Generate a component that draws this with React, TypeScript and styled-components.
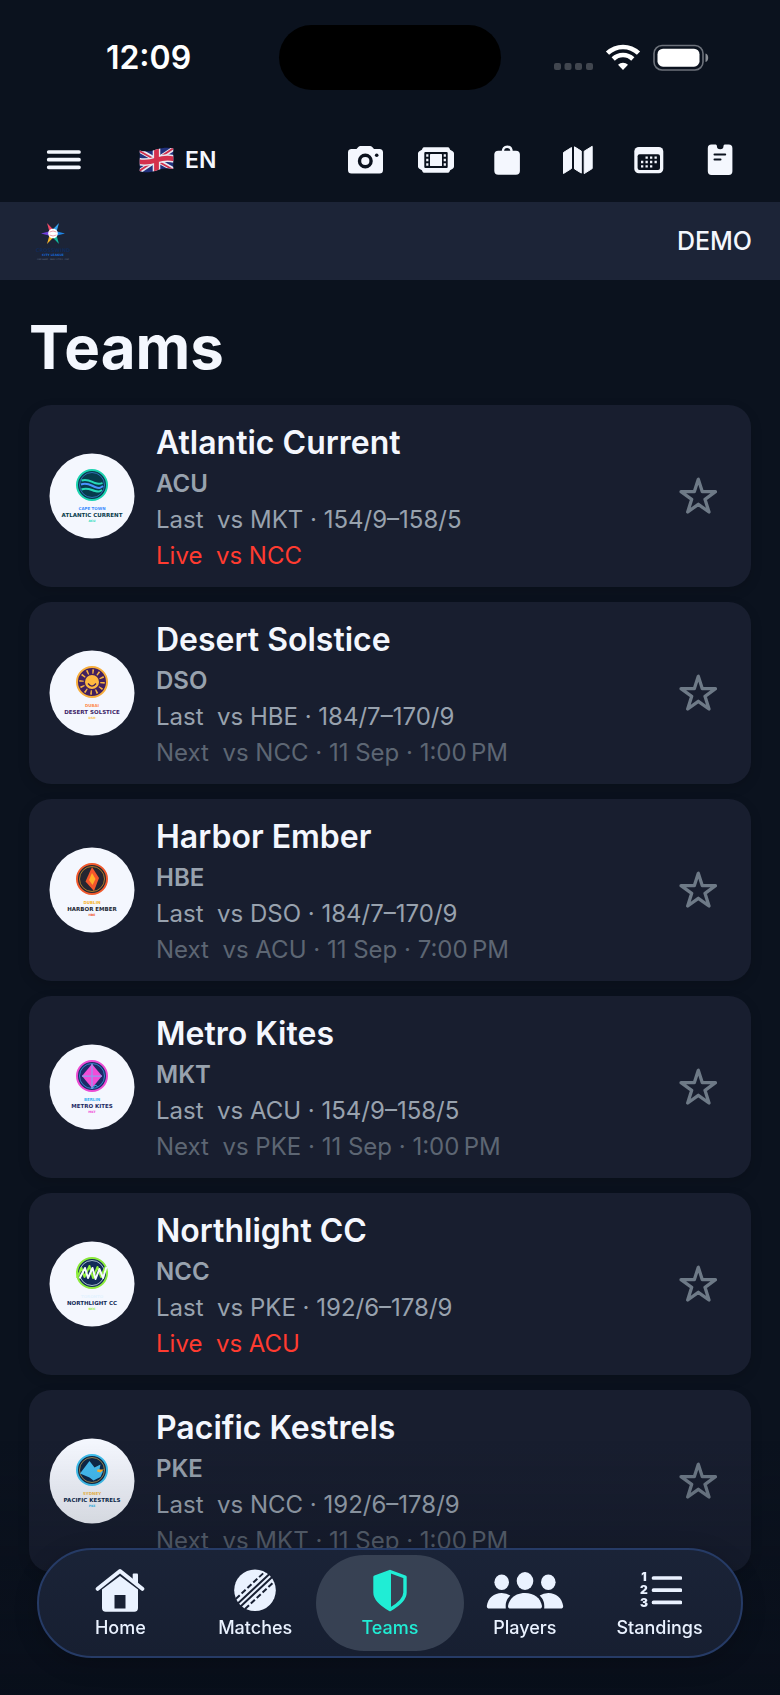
import type { ReactNode } from "react";
import styled, { createGlobalStyle } from "styled-components";

const GlobalStyle = createGlobalStyle`
  * {
    box-sizing: border-box;
  }

  body {
    margin: 0;
    background: #0b121e;
    color: #f4f7fe;
    font-family: Inter, "Liberation Sans", sans-serif;
  }

  button {
    padding: 0;
    border: 0;
    background: none;
    color: inherit;
    font: inherit;
    cursor: pointer;
  }

  svg {
    display: block;
  }
`;

const Page = styled.div`
  min-height: 100vh;
`;

const StatusBar = styled.div`
  display: grid;
  grid-template-columns: 1fr 222px 1fr;
  align-items: center;
  height: 118px;
  padding-bottom: 3px;
`;

const Clock = styled.time`
  padding-left: 18px;
  color: #fff;
  font-size: 32px;
  font-weight: 600;
  line-height: 36px;
  text-align: center;
`;

const Island = styled.div`
  height: 65px;
  border-radius: 33px;
  background: #000;
`;

const StatusIcons = styled.div`
  display: flex;
  justify-content: flex-end;
  padding-right: 71px;
`;

const Toolbar = styled.header`
  display: flex;
  align-items: center;
  height: 84px;
  padding: 0 42px 0 46px;
`;

const IconButton = styled.button`
  display: flex;
  color: #f4f7fe;
`;

const Language = styled.button`
  display: flex;
  align-items: center;
  gap: 10px;
  margin-left: 56px;
  font-size: 23px;
  font-weight: 600;
  line-height: 28px;
`;

const Actions = styled.div`
  display: flex;
  gap: 35px;
  margin-left: auto;
`;

const Banner = styled.div`
  display: flex;
  align-items: center;
  justify-content: space-between;
  height: 78px;
  padding: 0 28px 0 33px;
  background: #1c2437;
`;

const BannerLabel = styled.span`
  font-size: 25px;
  font-weight: 500;
  line-height: 30px;
`;

const Main = styled.main`
  padding: 30px 29px 0;
`;

const Title = styled.h1`
  margin: 0 0 21px;
  font-size: 60px;
  font-weight: 650;
  line-height: 74px;
`;

const TeamList = styled.ul`
  display: flex;
  flex-direction: column;
  gap: 15px;
  margin: 0;
  padding: 0;
  list-style: none;
`;

const TeamCard = styled.li`
  display: flex;
  align-items: center;
  gap: 21px;
  padding: 0 34px 0 20px;
  border-radius: 22px;
  background: #181e2f;
  box-shadow: 0 4px 12px rgba(0, 0, 0, 0.15);
`;

const TeamInfo = styled.div`
  flex: 1;
  min-width: 0;
  padding: 15px 0 13px;
`;

const TeamName = styled.h2`
  margin: 0;
  font-size: 32px;
  font-weight: 600;
  line-height: 46px;
`;

type LineTone = "code" | "last" | "next" | "live";

const lineColors: Record<LineTone, string> = {
  code: "#98a2ae",
  last: "#98a2ae",
  next: "#5d6673",
  live: "#ff3b30",
};

const Line = styled.p<{ $tone: LineTone }>`
  margin: 0;
  color: ${({ $tone }) => lineColors[$tone]};
  font-size: 24px;
  font-weight: ${({ $tone }) => ($tone === "code" ? 600 : 400)};
  line-height: 36px;
  white-space: pre;
`;

const StarButton = styled.button`
  display: flex;
  color: #6e7a87;
`;

const Fade = styled.div`
  position: fixed;
  right: 0;
  bottom: 0;
  left: 0;
  height: 255px;
  background: linear-gradient(rgba(6, 11, 22, 0), rgba(6, 11, 22, 0.4));
  pointer-events: none;
`;

const TabBar = styled.nav`
  position: fixed;
  right: 37px;
  bottom: 37px;
  left: 37px;
  display: grid;
  grid-template-columns: repeat(5, 1fr);
  padding: 5px 14px;
  border: 2px solid #263b66;
  border-radius: 55px;
  background: linear-gradient(#1a2337, #171f31);
  box-shadow: 0 6px 24px rgba(0, 0, 0, 0.2);
`;

const Tab = styled.a<{ $active?: boolean }>`
  position: relative;
  display: flex;
  flex-direction: column;
  align-items: center;
  gap: 4px;
  height: 96px;
  padding-top: 13px;
  color: ${({ $active }) => ($active ? "#20edd5" : "#eaf2ff")};
  font-size: 18px;
  font-weight: 500;
  line-height: 24px;
  text-decoration: none;

  &::before {
    content: "";
    position: absolute;
    inset: 0 -7px;
    border-radius: 48px;
    background: ${({ $active }) => ($active ? "#374153" : "transparent")};
  }

  > * {
    position: relative;
  }
`;

function StatusGlyphs() {
  return (
    <svg width="155" height="28" viewBox="0 0 155 28" aria-hidden="true">
      <g fill="#41464f">
        <rect x="0" y="19" width="7" height="7" rx="2" />
        <rect x="10.5" y="19" width="7" height="7" rx="2" />
        <rect x="21" y="19" width="7" height="7" rx="2" />
        <rect x="32" y="19" width="7" height="7" rx="2" />
      </g>
      <g fill="none" stroke="#fff" strokeWidth="4.6">
        <path d="M53.5 9.2a22.3 22.3 0 0 1 31 0" />
        <path d="M59.2 15a14 14 0 0 1 19.6 0" />
      </g>
      <path d="M64 20.8a7.2 7.2 0 0 1 10 0L69 26z" fill="#fff" />
      <rect x="100" y="1.5" width="49" height="24.5" rx="8" fill="none" stroke="#6d727b" strokeWidth="1.6" />
      <rect x="103.5" y="4.7" width="42" height="18" rx="5.5" fill="#fff" />
      <path d="M151.5 9.5c3.6 1 3.6 7.5 0 8.5z" fill="#8a8e95" />
    </svg>
  );
}

function MenuIcon() {
  return (
    <svg width="36" height="32" viewBox="0 0 36 32" aria-hidden="true">
      <path d="M2.7 8H33M2.7 15.7H33M2.7 23.3H33" stroke="currentColor" strokeWidth="3.7" strokeLinecap="round" />
    </svg>
  );
}

function FlagIcon() {
  return (
    <svg width="37" height="26" viewBox="0 0 36 26" aria-hidden="true">
      <clipPath id="flag">
        <path d="M1 3.5C7 5 12 4.5 18 2.5S30 0 35 1.5V22c-6-1.5-11-.5-17 1.5S6 26 1 24z" />
      </clipPath>
      <g clipPath="url(#flag)">
        <path d="M0 0h36v26H0z" fill="#21317c" />
        <path d="M0 3l36 20M0 25L36 1" stroke="#e9e8f0" strokeWidth="4.4" />
        <path d="M0 3.5l36 20M0 24.5L36 .5" stroke="#cf2f4c" strokeWidth="1.8" />
        <path d="M18 0v26M0 14.5c7 1.5 12 .5 18-1.5s12-2.5 18-1" stroke="#e9e8f0" strokeWidth="7.6" fill="none" />
        <path d="M18 0v26M0 14.5c7 1.5 12 .5 18-1.5s12-2.5 18-1" stroke="#d4304c" strokeWidth="4.8" fill="none" />
      </g>
    </svg>
  );
}

const toolIcons: { label: string; drawing: ReactNode }[] = [
  {
    label: "Photos",
    drawing: (
      <>
        <path
          fill="currentColor"
          d="M4 5h5.5l1.8-2Q12.2 2 13.5 2h9.5q1.3 0 2.2 1L27 5h5.5A3.5 3.5 0 0 1 36 8.5V26a3.5 3.5 0 0 1-3.5 3.5h-28A3.5 3.5 0 0 1 1 26V8.5A3.5 3.5 0 0 1 4 5z"
        />
        <circle cx="18.3" cy="17" r="5.8" fill="none" stroke="#0b121e" strokeWidth="3.4" />
        <circle cx="29.7" cy="11.3" r="1.8" fill="#0b121e" />
      </>
    ),
  },
  {
    label: "Tickets",
    drawing: (
      <>
        <path
          fill="currentColor"
          d="M6 3.3h24a1.5 1.5 0 0 1 1.3.8l.8 1.7 2.6 1.5A2.5 2.5 0 0 1 36 9.5v13a2.5 2.5 0 0 1-1.3 2.2l-2.6 1.5-.8 1.7a1.5 1.5 0 0 1-1.3.8H6a1.5 1.5 0 0 1-1.3-.8l-.8-1.7-2.6-1.5A2.5 2.5 0 0 1 0 22.5v-13a2.5 2.5 0 0 1 1.3-2.2l2.6-1.5.8-1.7A1.5 1.5 0 0 1 6 3.3z"
        />
        <rect x="6.3" y="8" width="23.4" height="16" rx="1" fill="#0b121e" />
        <rect x="12" y="10" width="12" height="12" rx=".6" fill="currentColor" />
        <path
          d="M9.3 10.2v2.5M9.3 14.7v2.5M9.3 19.3v2.5M26.8 10.2v2.5M26.8 14.7v2.5M26.8 19.3v2.5"
          stroke="currentColor"
          strokeWidth="2.2"
        />
      </>
    ),
  },
  {
    label: "Shop",
    drawing: (
      <>
        <rect x="5.3" y="6.7" width="25.6" height="24" rx="4" fill="currentColor" />
        <path d="M13.8 8c0-3.6 1.7-5.3 4.4-5.3S22.6 4.4 22.6 8" fill="none" stroke="currentColor" strokeWidth="2.4" />
      </>
    ),
  },
  {
    label: "Map",
    drawing: (
      <path
        fill="currentColor"
        stroke="currentColor"
        strokeWidth="1"
        strokeLinejoin="round"
        d="M3.5 8.5l8-5v21l-8 5zM14.5 2.8l6.8 4.3v22l-6.8-4.2zM24.2 7.2l8-4.9v22.3l-8 5z"
      />
    ),
  },
  {
    label: "Calendar",
    drawing: (
      <>
        <rect x="3.3" y="3" width="29" height="26.3" rx="4.5" fill="currentColor" />
        <rect x="6.6" y="10.3" width="22.4" height="15.7" rx="2" fill="#0b121e" />
        <path
          d="M14.5 13.7h2.3M19 13.7h2.3M23.5 13.7h2.3M10 18h2.3M14.5 18h2.3M19 18h2.3M23.5 18h2.3M10 22.3h2.3M14.5 22.3h2.3M19 22.3h2.3"
          stroke="currentColor"
          strokeWidth="2.3"
        />
      </>
    ),
  },
  {
    label: "Notes",
    drawing: (
      <>
        <path
          fill="currentColor"
          d="M9.5.5h4.2q1.2 0 1.2 1.5 0 3.2 3.3 3.2T21.5 2q0-1.5 1.2-1.5h4a3.7 3.7 0 0 1 3.7 3.7v23a3.7 3.7 0 0 1-3.7 3.7H9.5a3.7 3.7 0 0 1-3.7-3.7v-23A3.7 3.7 0 0 1 9.5.5z"
        />
        <path d="M12.5 10.5h10.7M12.5 15.5h6" stroke="#0b121e" strokeWidth="2" strokeLinecap="round" />
      </>
    ),
  },
];

const rays = ["#1f86e8", "#14b89c", "#f6b62c", "#7040dc", "#f04a68", "#35a4f0"];

function LeagueLogo() {
  return (
    <svg width="40" height="40" viewBox="0 0 40 40" role="img" aria-label="Crosswind">
      {rays.map((color, i) => (
        <path key={color} d="M20 9.5L32 12.5 20 15.5z" fill={color} transform={`rotate(${i * 60} 20 12.5)`} />
      ))}
      <circle cx="20" cy="12.5" r="4.8" fill="#fff" />
      <path d="M16.5 11q3.5-2 7 0M16.5 14q3.5 2 7 0" stroke="#e58a98" strokeWidth=".8" fill="none" />
      <g textAnchor="middle" fontFamily="DejaVu Sans, sans-serif">
        <text x="20" y="31" fontSize="5" fontWeight="700" fill="#102a56">CROSSWIND</text>
        <text x="20" y="35" fontSize="3" fontWeight="700" fill="#1668d8">CITY LEAGUE</text>
        <text x="20" y="39" fontSize="2" fill="#66728a">ONE GAME · MANY CITIES · ONE</text>
      </g>
    </svg>
  );
}

function StarIcon() {
  return (
    <svg width="38" height="38" viewBox="0 0 38 38" aria-hidden="true">
      <path
        d="M19.3 2.3L15.3 14.7 2 14.7 12.7 22.3 8.7 35 19.3 27.3 30 35 26 22.3 36.5 14.7 23.3 14.7z"
        fill="none"
        stroke="currentColor"
        strokeWidth="3.3"
        strokeLinejoin="round"
      />
    </svg>
  );
}

interface Crest {
  city: string;
  cityColor: string;
  nameColor: string;
  codeColor: string;
  ring: string;
  inner: string;
  hairline: string;
  emblem: ReactNode;
}

interface Team {
  name: string;
  code: string;
  last: string;
  status: "live" | "next";
  upcoming: string;
  crest: Crest;
}

const teams: Team[] = [
  {
    name: "Atlantic Current",
    code: "ACU",
    last: "vs MKT · 154/9–158/5",
    status: "live",
    upcoming: "vs NCC",
    crest: {
      city: "CAPE TOWN",
      cityColor: "#3b8cff",
      nameColor: "#073b4c",
      codeColor: "#19dcb8",
      ring: "#1bd3b0",
      inner: "#073b4c",
      hairline: "#3b82d8",
      emblem: (
        <g fill="none" strokeWidth="4" transform="translate(86 64)">
          <path d="M-21-9C-9-13-2-7 6-4s10 2 15 0" stroke="#27d8b8" />
          <path d="M-22-1C-9-6-2 1 6 4s10 3 16-2" stroke="#4a93ff" />
          <path d="M-21 9C-9 4-2 10 6 12s9 1 14-2" stroke="#27d8b8" />
        </g>
      ),
    },
  },
  {
    name: "Desert Solstice",
    code: "DSO",
    last: "vs HBE · 184/7–170/9",
    status: "next",
    upcoming: "vs NCC · 11 Sep · 1:00\u202fPM",
    crest: {
      city: "DUBAI",
      cityColor: "#ff8a4c",
      nameColor: "#3d1e66",
      codeColor: "#ffbe4a",
      ring: "#f7ae3c",
      inner: "#42205f",
      hairline: "#42205f",
      emblem: (
        <g transform="translate(86 64)">
          <circle r="21" fill="none" stroke="#f9b440" strokeWidth="9" strokeDasharray="3 8" />
          <circle r="14" fill="#ffb940" />
          <path d="M-8 3q8 10 16 0" fill="none" stroke="#42205f" strokeWidth="2.5" />
        </g>
      ),
    },
  },
  {
    name: "Harbor Ember",
    code: "HBE",
    last: "vs DSO · 184/7–170/9",
    status: "next",
    upcoming: "vs ACU · 11 Sep · 7:00\u202fPM",
    crest: {
      city: "DUBLIN",
      cityColor: "#f7b32d",
      nameColor: "#222733",
      codeColor: "#f0552f",
      ring: "#f0592d",
      inner: "#252631",
      hairline: "#d9982b",
      emblem: (
        <g transform="translate(86 64)">
          <path d="M0-24L14-2 4 24-13 5z" fill="#f3562c" />
          <path d="M0-12L7 0 1 12-6 2z" fill="#ffae28" />
        </g>
      ),
    },
  },
  {
    name: "Metro Kites",
    code: "MKT",
    last: "vs ACU · 154/9–158/5",
    status: "next",
    upcoming: "vs PKE · 11 Sep · 1:00\u202fPM",
    crest: {
      city: "BERLIN",
      cityColor: "#38aef0",
      nameColor: "#1d2a63",
      codeColor: "#f04cd6",
      ring: "#ec4bd3",
      inner: "#1c2b69",
      hairline: "#3ba7e8",
      emblem: (
        <g transform="translate(86 64)">
          <path d="M0-24L20 0 0 24-20 0z" fill="#f34cd8" />
          <path d="M0-24V26M-20 0h40" stroke="#8d9df0" strokeWidth="2.5" />
          <path d="M1 25l5-7 5 3" fill="none" stroke="#38c0f0" strokeWidth="2" />
        </g>
      ),
    },
  },
  {
    name: "Northlight CC",
    code: "NCC",
    last: "vs PKE · 192/6–178/9",
    status: "live",
    upcoming: "vs ACU",
    crest: {
      city: "TORONTO",
      cityColor: "#e4f3ff",
      nameColor: "#122b58",
      codeColor: "#8ff03a",
      ring: "#8aea3b",
      inner: "#122b58",
      hairline: "#d8ecf5",
      emblem: (
        <g fill="none" strokeWidth="4" strokeLinejoin="round" transform="translate(86 64)">
          <path d="M-30 10L-21-10-15 8-5-14 2 10 11-12 18 8 26-11" stroke="#8ff03a" />
          <path d="M-25 11L-14-10-8 10 1-10 7 12 15-8 22 10 29-12" stroke="#f5faff" />
        </g>
      ),
    },
  },
  {
    name: "Pacific Kestrels",
    code: "PKE",
    last: "vs NCC · 192/6–178/9",
    status: "next",
    upcoming: "vs MKT · 11 Sep · 1:00\u202fPM",
    crest: {
      city: "SYDNEY",
      cityColor: "#f6bd4a",
      nameColor: "#0d2a4d",
      codeColor: "#36bdf2",
      ring: "#3fc0ee",
      inner: "#0e2848",
      hairline: "#c9a552",
      emblem: (
        <g transform="translate(86 64)">
          <path d="M-24 7L-5-18 5-5l12-6-2 10 7 4-5 11-14 7-8-6z" fill="#45bdf2" />
          <path d="M11-1h13l-7 6-7-2z" fill="#ffb52e" />
        </g>
      ),
    },
  },
];

function TeamCrest({ team }: { team: Team }) {
  const { crest } = team;
  return (
    <svg width="86" height="86" viewBox="0 0 172 172" role="img" aria-label={`${team.name} logo`}>
      <circle cx="86" cy="86" r="85" fill="#f4f7fe" />
      <circle cx="86" cy="64" r="30" fill={crest.inner} stroke={crest.ring} strokeWidth="4" />
      <circle cx="86" cy="64" r="25" fill="none" stroke={crest.hairline} strokeWidth="1.5" />
      {crest.emblem}
      <g textAnchor="middle" fontFamily="DejaVu Sans, sans-serif" fontWeight="700">
        <text x="86" y="113" fontSize="8" fill={crest.cityColor}>{crest.city}</text>
        <text x="86" y="127" fontSize="11" fill={crest.nameColor}>{team.name.toUpperCase()}</text>
        <text x="86" y="138" fontSize="6" fill={crest.codeColor}>{team.code}</text>
      </g>
    </svg>
  );
}

const tabs: { label: string; width: number; drawing: ReactNode }[] = [
  {
    label: "Home",
    width: 50,
    drawing: (
      <>
        <path d="M2.7 20.8L25 3l22.3 17.8" fill="none" stroke="currentColor" strokeWidth="4" strokeLinecap="round" strokeLinejoin="round" />
        <path d="M37.7 11V6.5q0-1 1-1h3.3q1 0 1 1V17z" fill="currentColor" />
        <path
          fill="currentColor"
          fillRule="evenodd"
          d="M7 21.5L25 8l18 13.5V40q0 3.7-3.7 3.7H10.7Q7 43.7 7 40zM19.5 27v13.5h11V27z"
        />
      </>
    ),
  },
  {
    label: "Matches",
    width: 44,
    drawing: (
      <>
        <circle cx="22" cy="22.3" r="20.8" fill="currentColor" />
        <g stroke="#182033" strokeWidth="2" transform="translate(22 22.3) rotate(-43)">
          <path d="M-22-2H22M-22 2H22" />
          <path d="M-20-6.8H22M-20 6.8H22" strokeDasharray="5.5 2.5" />
        </g>
      </>
    ),
  },
  {
    label: "Teams",
    width: 38,
    drawing: (
      <>
        <path
          d="M19 3.5L34 9v15.5C34 32 26 37.5 19 41.5 12 37.5 4 32 4 24.5V9z"
          fill="none"
          stroke="currentColor"
          strokeWidth="3.4"
          strokeLinejoin="round"
        />
        <path d="M20 3v38C12 37.5 4 32 4 24.5V9z" fill="currentColor" />
      </>
    ),
  },
  {
    label: "Players",
    width: 78,
    drawing: (
      <g fill="currentColor">
        <ellipse cx="15.7" cy="14.3" rx="7.3" ry="7.7" />
        <ellipse cx="62.3" cy="14.3" rx="7.3" ry="7.7" />
        <ellipse cx="39" cy="13" rx="8.3" ry="9" />
        <path d="M24.3 27.5C19.8 32 19.5 36 19.8 40.6H3.5Q.8 40.6.8 38C2 30 8 25 15.7 25q5 0 8.6 2.5zM53.7 27.5c4.5 4.5 4.8 8.5 4.5 13.1h16.3q2.7 0 2.7-2.6C76 30 70 25 62.3 25q-5 0-8.6 2.5z" />
        <path d="M22 38C23.5 30 30 25 39 25s15.5 5 17 13q0 2.6-2.6 2.6H24.6Q22 40.6 22 38z" />
      </g>
    ),
  },
  {
    label: "Standings",
    width: 44,
    drawing: (
      <>
        <path d="M15.5 10h27M15.5 22.2h27M15.5 34.4h27" stroke="currentColor" strokeWidth="3.7" strokeLinecap="round" />
        <g fill="currentColor" fontSize="12" fontWeight="900" textAnchor="middle">
          <text x="6" y="13">1</text>
          <text x="6" y="26">2</text>
          <text x="6" y="39">3</text>
        </g>
      </>
    ),
  },
];

export default function App() {
  return (
    <Page>
      <GlobalStyle />
      <StatusBar>
        <Clock>12:09</Clock>
        <Island />
        <StatusIcons>
          <StatusGlyphs />
        </StatusIcons>
      </StatusBar>
      <Toolbar>
        <IconButton type="button" aria-label="Menu">
          <MenuIcon />
        </IconButton>
        <Language type="button">
          <FlagIcon />
          EN
        </Language>
        <Actions>
          {toolIcons.map(({ label, drawing }) => (
            <IconButton key={label} type="button" aria-label={label}>
              <svg width="36" height="32" viewBox="0 0 36 32" aria-hidden="true">
                {drawing}
              </svg>
            </IconButton>
          ))}
        </Actions>
      </Toolbar>
      <Banner>
        <LeagueLogo />
        <BannerLabel>DEMO</BannerLabel>
      </Banner>
      <Main>
        <Title>Teams</Title>
        <TeamList>
          {teams.map((team) => (
            <TeamCard key={team.code}>
              <TeamCrest team={team} />
              <TeamInfo>
                <TeamName>{team.name}</TeamName>
                <Line $tone="code">{team.code}</Line>
                <Line $tone="last">{`Last  ${team.last}`}</Line>
                <Line $tone={team.status}>{`${team.status === "live" ? "Live" : "Next"}  ${team.upcoming}`}</Line>
              </TeamInfo>
              <StarButton type="button" aria-label={`Follow ${team.name}`}>
                <StarIcon />
              </StarButton>
            </TeamCard>
          ))}
        </TeamList>
      </Main>
      <Fade />
      <TabBar>
        {tabs.map(({ label, width, drawing }) => (
          <Tab key={label} href={`#${label.toLowerCase()}`} $active={label === "Teams"}>
            <svg width={width} height="44" viewBox={`0 0 ${width} 44`} aria-hidden="true">
              {drawing}
            </svg>
            <span>{label}</span>
          </Tab>
        ))}
      </TabBar>
    </Page>
  );
}
